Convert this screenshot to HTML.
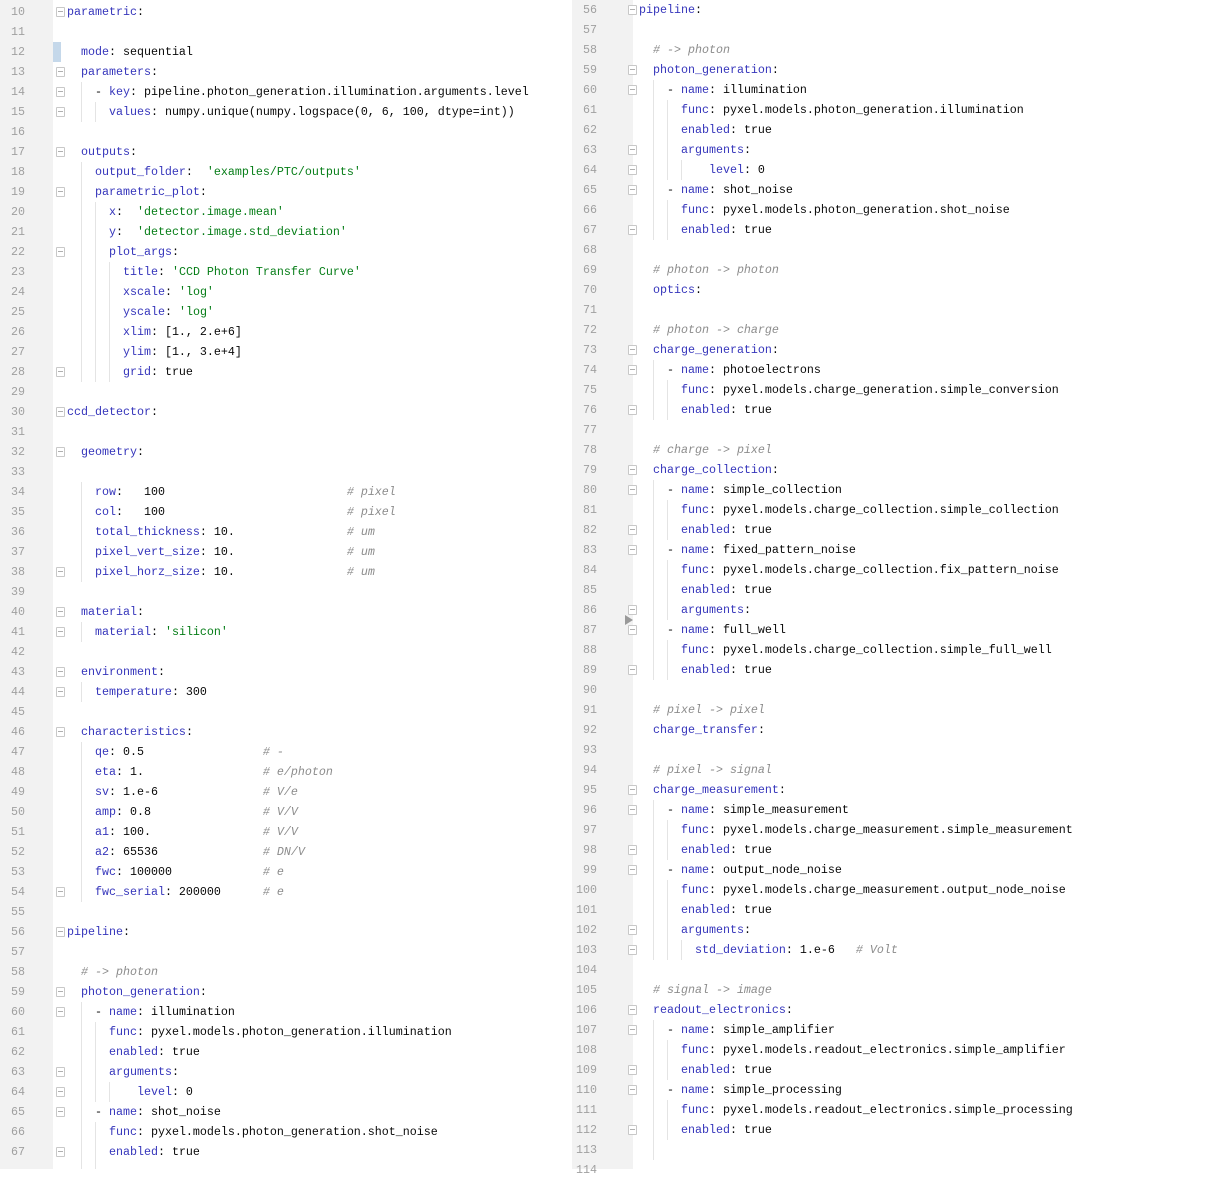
<!DOCTYPE html>
<html><head><meta charset="utf-8"><style>
*{margin:0;padding:0}
body{width:1217px;height:1169px;overflow:hidden;background:#fff;position:relative;font-family:"Liberation Mono",monospace;font-size:11.67px}
.g{position:absolute;top:0;height:1169px;background:#f2f2f2}
pre{position:absolute;font-family:"Liberation Mono",monospace;font-size:11.67px;line-height:20px;color:#080808}
.ln{color:#a0a0a0;text-align:right}
b{font-weight:normal;color:#3535bb}
i{color:#8c8c8c}
s{text-decoration:none;color:#067d17}
.v{position:absolute;width:1px;background:#e4e4e4}
.f{position:absolute;width:7px;height:8px;border:1px solid #c8c8c8;background:#fff;border-radius:1px}
.f:after{content:"";position:absolute;left:1px;top:3px;width:5px;height:1px;background:#b0b0b0}
</style></head><body>
<div class="g" style="left:0;width:53px"></div>
<div style="position:absolute;left:53px;top:42px;width:8px;height:20px;background:#c5d8ea"></div>
<div class="g" style="left:572px;width:61px"></div>

<pre class="ln" style="left:0;top:2px;width:25px">10
11
12
13
14
15
16
17
18
19
20
21
22
23
24
25
26
27
28
29
30
31
32
33
34
35
36
37
38
39
40
41
42
43
44
45
46
47
48
49
50
51
52
53
54
55
56
57
58
59
60
61
62
63
64
65
66
67</pre>

<pre class="ln" style="left:560px;top:0;width:37px">56
57
58
59
60
61
62
63
64
65
66
67
68
69
70
71
72
73
74
75
76
77
78
79
80
81
82
83
84
85
86
87
88
89
90
91
92
93
94
95
96
97
98
99
100
101
102
103
104
105
106
107
108
109
110
111
112
113
114</pre>

<div class="v" style="left:81px;top:82px;height:40px"></div>
<div class="v" style="left:95px;top:102px;height:20px"></div>
<div class="v" style="left:81px;top:162px;height:220px"></div>
<div class="v" style="left:95px;top:202px;height:180px"></div>
<div class="v" style="left:109px;top:262px;height:120px"></div>
<div class="v" style="left:81px;top:482px;height:100px"></div>
<div class="v" style="left:81px;top:622px;height:20px"></div>
<div class="v" style="left:81px;top:682px;height:20px"></div>
<div class="v" style="left:81px;top:742px;height:160px"></div>
<div class="v" style="left:81px;top:1002px;height:167px"></div>
<div class="v" style="left:95px;top:1022px;height:80px"></div>
<div class="v" style="left:109px;top:1082px;height:20px"></div>
<div class="v" style="left:95px;top:1122px;height:47px"></div>
<div class="v" style="left:653px;top:80px;height:160px"></div>
<div class="v" style="left:667px;top:100px;height:80px"></div>
<div class="v" style="left:681px;top:160px;height:20px"></div>
<div class="v" style="left:667px;top:200px;height:40px"></div>
<div class="v" style="left:653px;top:360px;height:60px"></div>
<div class="v" style="left:667px;top:380px;height:40px"></div>
<div class="v" style="left:653px;top:480px;height:200px"></div>
<div class="v" style="left:667px;top:500px;height:40px"></div>
<div class="v" style="left:667px;top:560px;height:60px"></div>
<div class="v" style="left:667px;top:640px;height:40px"></div>
<div class="v" style="left:653px;top:800px;height:160px"></div>
<div class="v" style="left:667px;top:820px;height:40px"></div>
<div class="v" style="left:667px;top:880px;height:80px"></div>
<div class="v" style="left:681px;top:940px;height:20px"></div>
<div class="v" style="left:653px;top:1020px;height:140px"></div>
<div class="v" style="left:667px;top:1040px;height:40px"></div>
<div class="v" style="left:667px;top:1100px;height:40px"></div>

<div class="f" style="left:56px;top:7px"></div>
<div class="f" style="left:56px;top:67px"></div>
<div class="f" style="left:56px;top:87px"></div>
<div class="f" style="left:56px;top:107px"></div>
<div class="f" style="left:56px;top:147px"></div>
<div class="f" style="left:56px;top:187px"></div>
<div class="f" style="left:56px;top:247px"></div>
<div class="f" style="left:56px;top:367px"></div>
<div class="f" style="left:56px;top:407px"></div>
<div class="f" style="left:56px;top:447px"></div>
<div class="f" style="left:56px;top:567px"></div>
<div class="f" style="left:56px;top:607px"></div>
<div class="f" style="left:56px;top:627px"></div>
<div class="f" style="left:56px;top:667px"></div>
<div class="f" style="left:56px;top:687px"></div>
<div class="f" style="left:56px;top:727px"></div>
<div class="f" style="left:56px;top:887px"></div>
<div class="f" style="left:56px;top:927px"></div>
<div class="f" style="left:56px;top:987px"></div>
<div class="f" style="left:56px;top:1007px"></div>
<div class="f" style="left:56px;top:1067px"></div>
<div class="f" style="left:56px;top:1087px"></div>
<div class="f" style="left:56px;top:1107px"></div>
<div class="f" style="left:56px;top:1147px"></div>
<div class="f" style="left:628px;top:5px"></div>
<div class="f" style="left:628px;top:65px"></div>
<div class="f" style="left:628px;top:85px"></div>
<div class="f" style="left:628px;top:145px"></div>
<div class="f" style="left:628px;top:165px"></div>
<div class="f" style="left:628px;top:185px"></div>
<div class="f" style="left:628px;top:225px"></div>
<div class="f" style="left:628px;top:345px"></div>
<div class="f" style="left:628px;top:365px"></div>
<div class="f" style="left:628px;top:405px"></div>
<div class="f" style="left:628px;top:465px"></div>
<div class="f" style="left:628px;top:485px"></div>
<div class="f" style="left:628px;top:525px"></div>
<div class="f" style="left:628px;top:545px"></div>
<div class="f" style="left:628px;top:605px"></div>
<div class="f" style="left:628px;top:625px"></div>
<div class="f" style="left:628px;top:665px"></div>
<div class="f" style="left:628px;top:785px"></div>
<div class="f" style="left:628px;top:805px"></div>
<div class="f" style="left:628px;top:845px"></div>
<div class="f" style="left:628px;top:865px"></div>
<div class="f" style="left:628px;top:925px"></div>
<div class="f" style="left:628px;top:945px"></div>
<div class="f" style="left:628px;top:1005px"></div>
<div class="f" style="left:628px;top:1025px"></div>
<div class="f" style="left:628px;top:1065px"></div>
<div class="f" style="left:628px;top:1085px"></div>
<div class="f" style="left:628px;top:1125px"></div>
<div style="position:absolute;left:625px;top:615px;width:0;height:0;border-left:8px solid #999;border-top:5px solid transparent;border-bottom:5px solid transparent"></div>

<pre style="left:67px;top:2px"><b>parametric</b>:

  <b>mode</b>: sequential
  <b>parameters</b>:
    - <b>key</b>: pipeline.photon_generation.illumination.arguments.level
      <b>values</b>: numpy.unique(numpy.logspace(0, 6, 100, dtype=int))

  <b>outputs</b>:
    <b>output_folder</b>:  <s>'examples/PTC/outputs'</s>
    <b>parametric_plot</b>:
      <b>x</b>:  <s>'detector.image.mean'</s>
      <b>y</b>:  <s>'detector.image.std_deviation'</s>
      <b>plot_args</b>:
        <b>title</b>: <s>'CCD Photon Transfer Curve'</s>
        <b>xscale</b>: <s>'log'</s>
        <b>yscale</b>: <s>'log'</s>
        <b>xlim</b>: [1., 2.e+6]
        <b>ylim</b>: [1., 3.e+4]
        <b>grid</b>: true

<b>ccd_detector</b>:

  <b>geometry</b>:

    <b>row</b>:   100                          <i># pixel</i>
    <b>col</b>:   100                          <i># pixel</i>
    <b>total_thickness</b>: 10.                <i># um</i>
    <b>pixel_vert_size</b>: 10.                <i># um</i>
    <b>pixel_horz_size</b>: 10.                <i># um</i>

  <b>material</b>:
    <b>material</b>: <s>'silicon'</s>

  <b>environment</b>:
    <b>temperature</b>: 300

  <b>characteristics</b>:
    <b>qe</b>: 0.5                 <i># -</i>
    <b>eta</b>: 1.                 <i># e/photon</i>
    <b>sv</b>: 1.e-6               <i># V/e</i>
    <b>amp</b>: 0.8                <i># V/V</i>
    <b>a1</b>: 100.                <i># V/V</i>
    <b>a2</b>: 65536               <i># DN/V</i>
    <b>fwc</b>: 100000             <i># e</i>
    <b>fwc_serial</b>: 200000      <i># e</i>

<b>pipeline</b>:

  <i># -&gt; photon</i>
  <b>photon_generation</b>:
    - <b>name</b>: illumination
      <b>func</b>: pyxel.models.photon_generation.illumination
      <b>enabled</b>: true
      <b>arguments</b>:
          <b>level</b>: 0
    - <b>name</b>: shot_noise
      <b>func</b>: pyxel.models.photon_generation.shot_noise
      <b>enabled</b>: true</pre>

<pre style="left:639px;top:0"><b>pipeline</b>:

  <i># -&gt; photon</i>
  <b>photon_generation</b>:
    - <b>name</b>: illumination
      <b>func</b>: pyxel.models.photon_generation.illumination
      <b>enabled</b>: true
      <b>arguments</b>:
          <b>level</b>: 0
    - <b>name</b>: shot_noise
      <b>func</b>: pyxel.models.photon_generation.shot_noise
      <b>enabled</b>: true

  <i># photon -&gt; photon</i>
  <b>optics</b>:

  <i># photon -&gt; charge</i>
  <b>charge_generation</b>:
    - <b>name</b>: photoelectrons
      <b>func</b>: pyxel.models.charge_generation.simple_conversion
      <b>enabled</b>: true

  <i># charge -&gt; pixel</i>
  <b>charge_collection</b>:
    - <b>name</b>: simple_collection
      <b>func</b>: pyxel.models.charge_collection.simple_collection
      <b>enabled</b>: true
    - <b>name</b>: fixed_pattern_noise
      <b>func</b>: pyxel.models.charge_collection.fix_pattern_noise
      <b>enabled</b>: true
      <b>arguments</b>:
    - <b>name</b>: full_well
      <b>func</b>: pyxel.models.charge_collection.simple_full_well
      <b>enabled</b>: true

  <i># pixel -&gt; pixel</i>
  <b>charge_transfer</b>:

  <i># pixel -&gt; signal</i>
  <b>charge_measurement</b>:
    - <b>name</b>: simple_measurement
      <b>func</b>: pyxel.models.charge_measurement.simple_measurement
      <b>enabled</b>: true
    - <b>name</b>: output_node_noise
      <b>func</b>: pyxel.models.charge_measurement.output_node_noise
      <b>enabled</b>: true
      <b>arguments</b>:
        <b>std_deviation</b>: 1.e-6   <i># Volt</i>

  <i># signal -&gt; image</i>
  <b>readout_electronics</b>:
    - <b>name</b>: simple_amplifier
      <b>func</b>: pyxel.models.readout_electronics.simple_amplifier
      <b>enabled</b>: true
    - <b>name</b>: simple_processing
      <b>func</b>: pyxel.models.readout_electronics.simple_processing
      <b>enabled</b>: true</pre>
</body></html>
